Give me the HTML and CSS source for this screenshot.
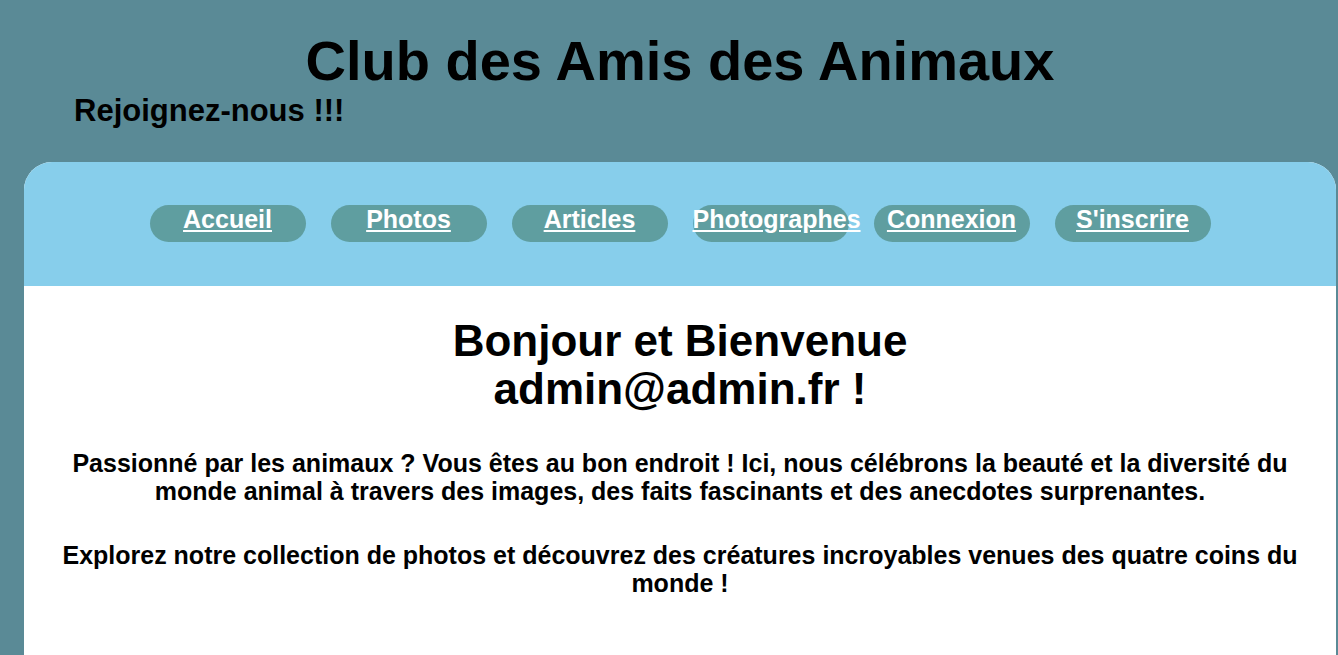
FILE: index.html
```html
<!DOCTYPE html>
<html lang="fr">
<head>
<meta charset="utf-8">
<title>Club des Amis des Animaux</title>
<link rel="stylesheet" href="styles.css">
</head>
<body>
<header class="site-header">
  <h1 class="site-title">Club des Amis des Animaux</h1>
  <h2 class="site-tagline">Rejoignez-nous !!!</h2>
</header>
<div class="page">
  <nav class="nav">
    <ul class="nav-list">
      <li class="nav-item"><a href="#">Accueil</a></li>
      <li class="nav-item"><a href="#">Photos</a></li>
      <li class="nav-item"><a href="#">Articles</a></li>
      <li class="nav-item"><a href="#">Photographes</a></li>
      <li class="nav-item"><a href="#">Connexion</a></li>
      <li class="nav-item"><a href="#">S'inscrire</a></li>
    </ul>
  </nav>
  <main class="content">
    <h2 class="welcome">Bonjour et Bienvenue<br>admin@admin.fr !</h2>
    <p class="intro">Passionné par les animaux ? Vous êtes au bon endroit ! Ici, nous célébrons la beauté et la diversité du monde animal à travers des images, des faits fascinants et des anecdotes surprenantes.</p>
    <p class="intro">Explorez notre collection de photos et découvrez des créatures incroyables venues des quatre coins du monde !</p>
  </main>
</div>
</body>
</html>
```

FILE: styles.css
```css
html, body {
  margin: 0;
  padding: 0;
}

body {
  background: #5a8a96;
  font-family: "Liberation Sans", Arial, sans-serif;
  color: #000;
}

.site-header {
  padding: 28px 2px 0 24px;
}

.site-title {
  margin: 0;
  text-align: center;
  font-size: 56px;
  font-weight: bold;
}

.site-tagline {
  margin: 0 0 0 50px;
  font-size: 31px;
  font-weight: bold;
}

.page {
  margin: 33px 2px 0 24px;
  border-radius: 28px 28px 0 0;
  overflow: hidden;
  background: #fff;
}

.nav {
  background: #87ceeb;
  height: 124px;
  box-sizing: border-box;
  padding-top: 43px;
  display: flex;
  justify-content: center;
}

.nav-list {
  list-style: none;
  margin: 0;
  padding: 0;
  display: flex;
  align-items: flex-start;
  gap: 25px;
}

.nav-item {
  width: 156px;
  height: 37px;
  box-sizing: border-box;
  background: #5f9ea0;
  border-radius: 19px;
  text-align: center;
  white-space: nowrap;
}

.nav-item a {
  color: #fff;
  font-weight: bold;
  font-size: 25px;
  text-decoration: underline;
}

.content {
  padding: 31px 20px 60px;
  text-align: center;
}

.welcome {
  margin: 0 0 1px;
  font-size: 44px;
  line-height: 48px;
  font-weight: bold;
}

.intro {
  margin: 36px 0;
  font-size: 25px;
  line-height: 28px;
  font-weight: bold;
}
```
